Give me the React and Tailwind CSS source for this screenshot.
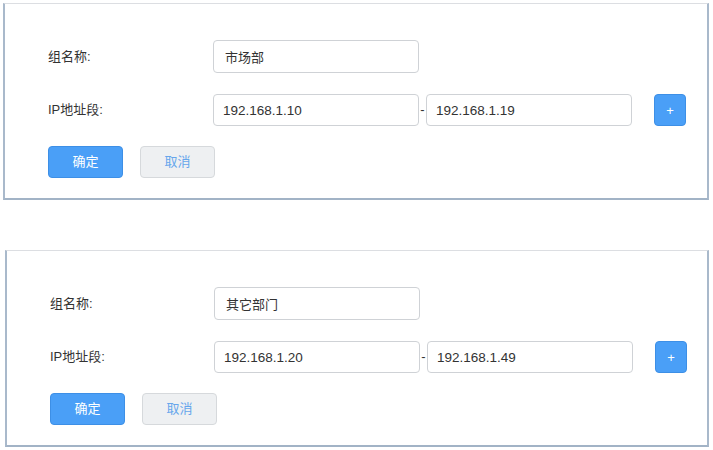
import { useState } from "react";

const groups = [
  { name: "市场部", start: "192.168.1.10", end: "192.168.1.19", box: "ml-[3px] mt-[3px] w-[706px]", lw: "w-[165px]" },
  { name: "其它部门", start: "192.168.1.20", end: "192.168.1.49", box: "ml-[5px] mt-[50px] w-[704px]", lw: "w-[164px]" },
];

const font = { fontFamily: '"Liberation Sans", "Noto Sans CJK SC", sans-serif' };

const GroupPanel = ({ group }) => {
  const [name, setName] = useState(group.name);
  const [start, setStart] = useState(group.start);
  const [end, setEnd] = useState(group.end);

  return (
    <div
      className={`${group.box} h-[197px] bg-white border-t border-t-[#dcdee2] border-l-2 border-r-2 border-b-2 border-l-[#a9b9cb] border-r-[#a9b9cb] border-b-[#a2b3c6] pl-[43px] pt-[36px]`}
    >
      <div className="flex items-center h-[33px]">
        <label className={`${group.lw} text-[13px] text-[#333]`}>组名称:</label>
        <input
          value={name}
          onChange={(e) => setName(e.target.value)}
          className="w-[206px] h-[33px] rounded-[4px] border border-[#cfd2d6] px-[11px] text-[13px] text-[#333] outline-none"
        />
      </div>

      <div className="flex items-center h-[32px] mt-[21px]">
        <label className={`${group.lw} text-[13px] text-[#333]`}>IP地址段:</label>
        <input
          value={start}
          onChange={(e) => setStart(e.target.value)}
          className="w-[206px] h-[32px] rounded-[4px] border border-[#cfd2d6] px-[9px] text-[13.5px] text-[#333] outline-none"
        />
        <span className="w-[7px] text-center text-[13px] text-[#333]">-</span>
        <input
          value={end}
          onChange={(e) => setEnd(e.target.value)}
          className="w-[206px] h-[32px] rounded-[4px] border border-[#cfd2d6] px-[9px] text-[13.5px] text-[#333] outline-none"
        />
        <button className="ml-[22px] w-[32px] h-[32px] rounded-[4px] bg-[#4a9ff7] border border-[#3d8fe6] text-white text-[13px] leading-none">
          +
        </button>
      </div>

      <div className="flex items-center gap-[17px] mt-[20px]">
        <button className="w-[75px] h-[32px] rounded-[4px] bg-[#4a9ff7] border border-[#3d8fe6] text-white text-[13px]">
          确定
        </button>
        <button className="w-[75px] h-[32px] rounded-[4px] bg-[#eef0f2] border border-[#d6d9dc] text-[#66a6ec] text-[13px]">
          取消
        </button>
      </div>
    </div>
  );
};

const App = () => {
  return (
    <div className="w-[713px] h-[450px] bg-white overflow-hidden" style={font}>
      {groups.map((g, i) => (
        <GroupPanel key={i} group={g} />
      ))}
    </div>
  );
};

export default App;
